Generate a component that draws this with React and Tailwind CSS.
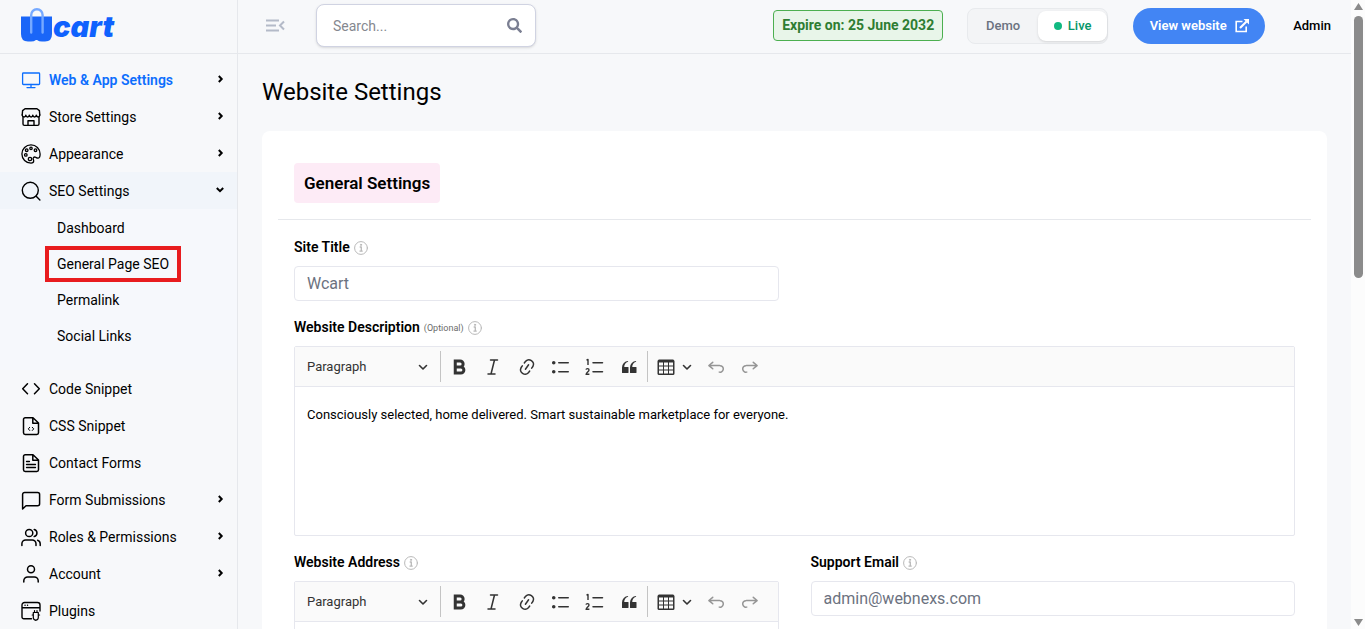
// src/App.jsx
import { Fragment } from 'react';
import { FaSearch } from 'react-icons/fa';

const Icon = ({ children, size = 20, box = 20, stroke = 1.5, className = '' }) => (
  <svg
    width={size}
    height={size}
    viewBox={`0 0 ${box} ${box}`}
    fill="none"
    stroke="currentColor"
    strokeWidth={stroke}
    strokeLinecap="round"
    strokeLinejoin="round"
    aria-hidden="true"
    className={`shrink-0 ${className}`}
  >
    {children}
  </svg>
);

const MonitorIcon = () => (
  <Icon stroke={1.3}>
    <rect x="1.6" y="3" width="17" height="11.5" rx="0.8" />
    <path d="M10 14.5v3M6 17.6h8" />
  </Icon>
);

const StoreIcon = () => (
  <Icon stroke={1.4}>
    <path d="M4 1.8h12l2.4 1.8.4 4.4M1.200 8l.4-4.4L4 1.800" />
    <path d="M1.2 8c.2 2.6 3.4 2.6 3.6.2.4 2.4 3.2 2.4 3.5 0 .4 2.4 3.2 2.4 3.5 0 .4 2.4 3.2 2.4 3.5 0 .3 2.4 3.4 2.4 3.5-.2" />
    <path d="M2 10.5V17a1.4 1.4 0 0 0 1.4 1.4h13.2A1.4 1.4 0 0 0 18 17v-6.5" />
    <path d="M7 18.2v-4.4h6v4.4" />
  </Icon>
);

const PaletteIcon = () => (
  <Icon stroke={1.3}>
    <path d="M10 .9a9.1 9.1 0 0 0 0 18.2c1.6 0 2.7-.8 2.7-2 0-1.400-.9-1.900-.5-3 .3-.9 1.200-1.200 2.100-1 1 .2 1.500 1.200 2.900 1 1.500-.2 1.900-2 1.900-4.100C19.100 4.700 15 .9 10 .9z" />
    <circle cx="10" cy="4.300" r="1.200" />
    <circle cx="5.700" cy="6.200" r="1.300" />
    <circle cx="14.500" cy="6.200" r="1.300" />
    <circle cx="4.800" cy="10.900" r="1.300" />
    <circle cx="9" cy="15" r="1.700" />
  </Icon>
);

const SearchIcon = () => (
  <Icon stroke={1.4}>
    <circle cx="9.300" cy="9.300" r="8" />
    <path d="M15.200 15.200l3.700 3.700" />
  </Icon>
);

const CodeIcon = () => (
  <Icon stroke={1.500}>
    <path d="M6.500 4.800L1.700 9.800l4.800 5M13.500 4.800l4.800 5-4.800 5" />
  </Icon>
);

const CssIcon = () => (
  <Icon stroke={1.500}>
    <path d="M12 1.800H4.200a1.700 1.700 0 0 0-1.700 1.700v13.200a1.700 1.700 0 0 0 1.700 1.700h11.600a1.700 1.700 0 0 0 1.700-1.700V7zM11.800 2v5.200h5.500" />
    <path d="M8.700 11.300l-1.400 1.600 1.400 1.600M11.300 11.300l1.400 1.600-1.400 1.600" strokeWidth="1" />
  </Icon>
);

const FormIcon = () => (
  <Icon stroke={1.500}>
    <path d="M12 1.800H4.200a1.700 1.700 0 0 0-1.700 1.700v13.200a1.700 1.700 0 0 0 1.700 1.700h11.600a1.700 1.700 0 0 0 1.700-1.700V7zM11.800 2v5.200h5.500" />
    <path d="M5.500 8.500h3M5.500 11.500h9M5.500 14.500h9" strokeWidth="1.300" />
  </Icon>
);

const MessageIcon = () => (
  <Icon stroke={1.500}>
    <path d="M1.600 19V4.500a2 2 0 0 1 2-2h13a2 2 0 0 1 2 2v9.200a2 2 0 0 1-2 2H5z" />
  </Icon>
);

const UsersIcon = () => (
  <Icon stroke={1.500}>
    <circle cx="8.200" cy="6" r="3.600" />
    <path d="M.9 18.500v-1.800a3.800 3.800 0 0 1 3.800-3.800h6.500a3.800 3.800 0 0 1 3.800 3.800v1.800M13.200 2.500a3.600 3.600 0 0 1 0 7M16.600 13.200a3.800 3.800 0 0 1 2.600 3.500v1.800" />
  </Icon>
);

const UserIcon = () => (
  <Icon stroke={1.500}>
    <circle cx="10" cy="5.200" r="3.500" />
    <path d="M2.800 18v-1.200A3.900 3.900 0 0 1 6.700 12.900h6.600a3.900 3.900 0 0 1 3.900 3.900V18" />
  </Icon>
);

const PluginIcon = () => (
  <Icon stroke={1.400}>
    <path d="M10.500 17.800H2.800A1.800 1.800 0 0 1 1 16V4a2.500 2.500 0 0 1 2.500-2.500h13A2.500 2.500 0 0 1 19 4v6M1 6.800h18M4 4.200h.1M6.500 4.200h.1" />
    <path
      d="M13.500 11v-1.400M16 11v-1.400M12.300 11.500h5v5a2.500 2.500 0 0 1-5 0zM14.800 19v.600M11.200 14h1M17.600 14h1"
      strokeWidth="1.200"
    />
  </Icon>
);

const ChevronIcon = ({ open }) => (
  <Icon size={10} box={10} stroke={2}>
    <path d={open ? 'M1.800 3L5 6.200 8.200 3' : 'M3.800 2L6.700 5 3.800 8'} strokeLinecap="butt" strokeLinejoin="miter" />
  </Icon>
);

const InfoIcon = () => (
  <Icon size={14} box={14} stroke={1} className="text-[#b9b9b9]">
    <circle cx="7" cy="7" r="6.400" />
    <path d="M5.700 6h1.600v4M5.500 10.200h3.200" strokeWidth="1.300" strokeLinecap="butt" />
    <circle cx="7" cy="3.800" r="0.600" fill="currentColor" />
  </Icon>
);

const Logo = () => (
  <a href="#home" aria-label="Wcart" className="flex items-end text-[#0f62fe]">
    <svg width="32" height="34" viewBox="0 0 32 34" aria-hidden="true">
      <path
        d="M0 8.500h31v17.500q0 7.500-7 7.500h-3q-3 0-5-1.500h-1q-2 1.500-5 1.500H7q-7 0-7-7.500z"
        fill="#1a66f8"
      />
      <path d="M10.200 24.500V7a5.700 5.700 0 0 1 11.400 0V24.500" fill="none" stroke="#76a9ff" strokeWidth="2.400" strokeLinecap="round" />
    </svg>
    <span className="font-[Inter,sans-serif] text-[29px] leading-[30px] font-black italic">cart</span>
  </a>
);

const menu = [
  { label: 'Web & App Settings', icon: MonitorIcon, more: true, active: true },
  { label: 'Store Settings', icon: StoreIcon, more: true },
  { label: 'Appearance', icon: PaletteIcon, more: true },
  {
    label: 'SEO Settings',
    icon: SearchIcon,
    more: true,
    children: ['Dashboard', 'General Page SEO', 'Permalink', 'Social Links'],
  },
  { label: 'Code Snippet', icon: CodeIcon },
  { label: 'CSS Snippet', icon: CssIcon },
  { label: 'Contact Forms', icon: FormIcon },
  { label: 'Form Submissions', icon: MessageIcon, more: true },
  { label: 'Roles & Permissions', icon: UsersIcon, more: true },
  { label: 'Account', icon: UserIcon, more: true },
  { label: 'Plugins', icon: PluginIcon },
];

const Sidebar = () => (
  <aside className="flex w-[238px] shrink-0 flex-col border-r border-[#e6e8ec]">
    <div className="flex h-[54px] shrink-0 items-start border-b border-[#e6e8ec] pt-2 pl-[21px]">
      <Logo />
    </div>
    <nav className="pt-[7px] text-sm">
      {menu.map((item) => (
        <Fragment key={item.label}>
          <a
            href="#menu"
            className={`flex h-[37px] items-center gap-2 pr-3 pl-[21px] ${item.active ? 'font-semibold text-[#0d6efd]' : ''} ${item.children ? 'bg-[#f1f5fa]' : ''}`}
          >
            <item.icon />
            <span className="flex-1">{item.label}</span>
            {item.more && (
              <span className="pb-[2px] text-black">
                <ChevronIcon open={Boolean(item.children)} />
              </span>
            )}
          </a>
          {item.children && (
            <div className="bg-[#f6f8fc] pt-px pb-4">
              {item.children.map((child) => (
                <a key={child} href="#seo" className="flex h-9 items-center pl-[45px]">
                  {child === 'General Page SEO' ? (
                    <span className="flex h-9 items-center border-4 border-[#e81c1f] px-2">{child}</span>
                  ) : (
                    <span className="px-3">{child}</span>
                  )}
                </a>
              ))}
            </div>
          )}
        </Fragment>
      ))}
    </nav>
  </aside>
);

const Header = () => (
  <header className="flex h-[54px] shrink-0 items-center border-b border-[#e6e8ec] pr-5 pb-[2px] pl-[27px]">
    <button type="button" aria-label="Collapse menu" className="text-[#b4bac8]">
      <Icon stroke={2}>
        <path d="M1 4.500h13M1 9.500h10M1 14.500h13M19 5.500l-4 4 4 4" strokeLinecap="butt" strokeLinejoin="miter" />
      </Icon>
    </button>
    <label className="ml-[31px] flex h-[43px] w-[220px] items-center rounded-lg border border-[#d0d3e2] bg-white px-4 text-[#7b7f92] shadow-sm">
      <input
        type="search"
        aria-label="Search"
        placeholder="Search..."
        className="w-full min-w-0 text-sm outline-none placeholder:text-[#85888f]"
      />
      <FaSearch size={15} className="mr-[-3px] shrink-0" />
    </label>
    <div className="ml-auto flex shrink-0 items-center">
      <p className="rounded border border-[#4caf50] bg-[#e8f5e9] px-2 py-1 text-sm leading-[21px] font-bold text-[#2e7d32]">
        Expire on: 25 June 2032
      </p>
      <div className="ml-6 flex h-9 w-[141px] items-center rounded-lg border border-[#e8eaed] bg-[#f3f4f6] text-[13px] font-medium">
        <button type="button" className="flex-1 text-[#6b7280]">Demo</button>
        <button
          type="button"
          className="flex h-[30px] w-[69px] items-center justify-center gap-[6px] rounded-lg bg-white text-[#059669] shadow-sm"
        >
          <span className="size-2 rounded-full bg-[#10b981]" />
          Live
        </button>
      </div>
      <a
        href="#site"
        className="ml-[25px] flex h-9 w-[132px] items-center justify-center gap-2 rounded-full bg-[#4285f4] text-[13px] font-semibold text-white"
      >
        View website
        <Icon size={14} box={14} stroke={1.600}>
          <path d="M7.500 2.500H1.200v10h10V7.500" strokeLinecap="butt" strokeLinejoin="miter" />
          <path d="M5 9l6.500-6.500" strokeWidth="2.200" strokeLinecap="butt" />
          <path d="M8.500 0h5.500v5.500z" fill="currentColor" stroke="none" />
        </Icon>
      </a>
      <button type="button" className="ml-7 text-[13px] font-medium">Admin</button>
    </div>
  </header>
);

const EditorButton = ({ label, disabled, children }) => (
  <button
    type="button"
    aria-label={label}
    disabled={disabled}
    className="flex w-[34px] items-center justify-center disabled:opacity-50"
  >
    {children}
  </button>
);

const Glyph = ({ d, flip }) => (
  <svg width="20" height="20" viewBox="0 0 20 20" fill="currentColor" aria-hidden="true" className={flip ? '-scale-x-100' : ''}>
    <path d={d} />
  </svg>
);

const paths = {
  link: 'm11.077 15 .991-1.416a.75.75 0 1 1 1.229.86l-1.148 1.640a.748.748 0 0 1-.217.206 5.251 5.251 0 0 1-8.503-5.955.741.741 0 0 1 .12-.274l1.147-1.639a.75.75 0 1 1 1.228.86L4.933 10.700l.006.003a3.750 3.750 0 0 0 6.132 4.294l.006.004zm5.494-5.335a.748.748 0 0 1-.12.274l-1.147 1.639a.75.75 0 1 1-1.228-.86l.86-1.230a3.750 3.750 0 0 0-6.144-4.301l-.86 1.229a.75.75 0 0 1-1.229-.86l1.148-1.640a.748.748 0 0 1 .217-.206 5.251 5.251 0 0 1 8.503 5.955zm-4.563-2.532a.75.75 0 0 1 .184 1.045l-3.155 4.505a.75.75 0 1 1-1.229-.86l3.155-4.506a.75.75 0 0 1 1.045-.184z',
  bullets:
    'M7 5.750c0 .414.336.75.75.75h9.500a.75.75 0 1 0 0-1.500h-9.500a.75.75 0 0 0-.75.75zm-6 0C1 4.784 1.777 4 2.750 4c.966 0 1.750.777 1.750 1.750 0 .966-.777 1.750-1.750 1.750C1.784 7.500 1 6.723 1 5.750zm6 9c0 .414.336.75.75.75h9.500a.75.75 0 1 0 0-1.500h-9.500a.75.75 0 0 0-.75.75zm-6 0c0-.966.777-1.750 1.750-1.750.966 0 1.750.777 1.750 1.750 0 .966-.777 1.750-1.750 1.750-.966 0-1.750-.777-1.750-1.750z',
  quote:
    'M3 10.423a6.500 6.500 0 0 1 6.056-6.408l.038.67C6.448 5.423 5.354 7.663 5.220 10H9c.552 0 .5.432.5.986v4.511c0 .554-.448.503-1 .503h-5c-.552 0-.5-.449-.5-1.003v-4.574zm8 0a6.500 6.500 0 0 1 6.056-6.408l.038.67c-2.646.739-3.740 2.979-3.873 5.315H17c.552 0 .5.432.5.986v4.511c0 .554-.448.503-1 .503h-5c-.552 0-.5-.449-.5-1.003v-4.574z',
  table:
    'M3 5.500v3h4v-3H3zm0 4v3h4v-3H3zm0 4v3h4v-3H3zm5 3h4v-3H8v3zm5 0h4v-3h-4v3zm4-4v-3h-4v3h4zm0-4v-3h-4v3h4zm1.500 8a1.500 1.500 0 0 1-1.500 1.500H3A1.500 1.500 0 0 1 1.500 17V4c.222-.863 1.068-1.500 2-1.500h13c.932 0 1.778.637 2 1.500v13zM12 12.500v-3H8v3h4zm0-4v-3H8v3h4z',
  undo: 'm5.042 9.367 2.189 1.837a.75.75 0 0 1-.965 1.149l-3.788-3.180a.747.747 0 0 1-.21-.284.75.75 0 0 1 .17-.945L6.230 4.762a.75.75 0 1 1 .964 1.150L4.863 7.866h8.917A.75.75 0 0 1 14 7.900a4 4 0 1 1-1.477 7.718l.344-1.489a2.500 2.500 0 1 0 1.094-4.730l.008-.032H5.042z',
};

const CaretIcon = () => (
  <Icon size={10} box={10} stroke={1.600}>
    <path d="M1.500 3.500L5 7l3.500-3.500" />
  </Icon>
);

const Editor = ({ id, children }) => (
  <div className="rounded-xs border border-[#e6e7ee]">
    <div className="flex h-10 border-b border-[#e6e7ee] bg-[#fafafa] text-[#333]">
      <div className="flex w-[145px] items-center pr-3 pl-3">
        <select aria-label={`${id} heading`} className="w-full appearance-none text-[13px] outline-none">
          <option>Paragraph</option>
        </select>
        <CaretIcon />
      </div>
      <span className="my-1 w-px bg-[#c4c4c4]" />
      <div className="flex px-px">
        <EditorButton label="Bold">
          <Icon size={18} box={24} stroke={4}>
            <path d="M7 12h7.500a4 4 0 0 1 0 8H7V4h6.500a4 4 0 0 1 0 8" strokeLinejoin="miter" />
          </Icon>
        </EditorButton>
        <EditorButton label="Italic">
          <Icon stroke={1.500}>
            <path d="M7.500 3h7M5 17h7M11.500 3L8 17" />
          </Icon>
        </EditorButton>
        <EditorButton label="Link">
          <Glyph d={paths.link} />
        </EditorButton>
        <EditorButton label="Bulleted list">
          <Glyph d={paths.bullets} />
        </EditorButton>
        <EditorButton label="Numbered list">
          <Icon>
            <path d="M8 5.750h9.500M8 14.750h9.500" />
            <path d="M1.500 3.200L3 2.500V8M1 12.700c.3-1.500 3-1.400 3 .2C4 14.500 1.500 15.500 1.100 17.300h3.300" strokeWidth="1.400" strokeLinecap="butt" />
          </Icon>
        </EditorButton>
        <EditorButton label="Block quote">
          <Glyph d={paths.quote} />
        </EditorButton>
      </div>
      <span className="my-1 w-px bg-[#c4c4c4]" />
      <button type="button" aria-label="Insert table" className="flex w-[51px] items-center justify-center gap-[6px]">
        <Glyph d={paths.table} />
        <CaretIcon />
      </button>
      <EditorButton label="Undo" disabled>
        <Glyph d={paths.undo} />
      </EditorButton>
      <EditorButton label="Redo" disabled>
        <Glyph d={paths.undo} flip />
      </EditorButton>
    </div>
    <div
      id={id}
      role="textbox"
      aria-labelledby={`${id}-label`}
      className="h-[148px] px-3 py-[18px] text-[13px] leading-5"
    >
      {children}
    </div>
  </div>
);

const FieldLabel = ({ id, optional, input, children }) => {
  const Tag = input ? 'label' : 'span';
  return (
    <div className="mb-[9px] flex h-5 items-center gap-1">
      <Tag id={`${id}-label`} htmlFor={input ? id : undefined} className="text-sm font-semibold">
        {children}
      </Tag>
      {optional && <span className="pt-[3px] text-[9px] text-[#6b6b6b]">(Optional)</span>}
      <span className="pt-[2px]">
        <InfoIcon />
      </span>
    </div>
  );
};

const TextInput = ({ id, value }) => (
  <input
    id={id}
    type="text"
    defaultValue={value}
    className="h-[35px] w-full rounded border border-[#e6e7ee] px-3 text-base text-[#6c7280] outline-none"
  />
);

const App = () => {
  return (
    <div className="flex h-screen overflow-hidden bg-[#f7f8fa] font-[Roboto,sans-serif] text-black">
      <Sidebar />
      <div className="flex min-w-0 flex-1 flex-col">
        <Header />
        <main className="flex-1 overflow-hidden px-6 pt-[22px]">
          <h1 className="text-2xl leading-8">Website Settings</h1>
          <section className="mt-[23px] rounded-lg bg-white px-4 pt-8">
            <div className="border-b border-[#e6e8ec] px-4 pb-4">
              <h2 className="inline-block rounded bg-[#fdebf6] px-[10px] text-[17px] leading-10 font-semibold">
                General Settings
              </h2>
            </div>
            <form className="grid grid-cols-2 gap-x-8 gap-y-4 px-4 pt-[17px]">
              <div>
                <FieldLabel id="site-title" input>Site Title</FieldLabel>
                <TextInput id="site-title" value="Wcart" />
              </div>
              <div className="col-span-2">
                <FieldLabel id="description" optional>Website Description</FieldLabel>
                <Editor id="description">
                  <p>Consciously selected, home delivered. Smart sustainable marketplace for everyone.</p>
                </Editor>
              </div>
              <div>
                <FieldLabel id="address">Website Address</FieldLabel>
                <Editor id="address" />
              </div>
              <div>
                <FieldLabel id="email" input>Support Email</FieldLabel>
                <TextInput id="email" value="admin@webnexs.com" />
              </div>
            </form>
          </section>
        </main>
      </div>
      <div className="flex w-[14px] shrink-0 flex-col items-center bg-[#fcfcfc] py-[3px] text-[#8b8b8b]" aria-hidden="true">
        <svg width="9" height="7" viewBox="0 0 9 7" fill="currentColor">
          <path d="M4.500 0L9 7H0z" />
        </svg>
        <div className="mt-[6px] h-[42%] w-[9px] rounded-full bg-[#8b8b8b]" />
        <svg width="9" height="7" viewBox="0 0 9 7" fill="currentColor" className="mt-auto">
          <path d="M4.500 7L0 0h9z" />
        </svg>
      </div>
    </div>
  );
};

export default App;
